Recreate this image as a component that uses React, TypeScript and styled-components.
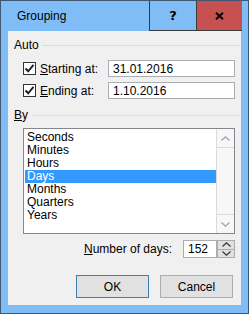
import React from 'react';
import styled, { createGlobalStyle } from 'styled-components';

const GlobalStyle = createGlobalStyle`
  html, body {
    margin: 0;
    padding: 0;
    background: #ffffff;
  }
  body {
    font-family: 'Liberation Sans', Arial, sans-serif;
    font-size: 12px;
    color: #000000;
  }
`;

const Window = styled.div`
  width: 249px;
  height: 314px;
  box-sizing: border-box;
  border: 1px solid #3f5770;
  background: #80bdf7;
  display: flex;
  flex-direction: column;
`;

const TitleBar = styled.div`
  height: 30px;
  display: flex;
  align-items: stretch;
  padding-right: 6px;
`;

const Title = styled.div`
  flex: 1;
  padding-left: 16px;
  display: flex;
  align-items: center;
  font-size: 12px;
  color: #000;
`;

const CaptionButton = styled.div<{ $close?: boolean }>`
  width: ${(p) => (p.$close ? '46px' : '47px')};
  box-sizing: border-box;
  border-left: 1px solid #3c3c3c;
  border-bottom: 1px solid #3c3c3c;
  background: ${(p) => (p.$close ? '#c75050' : 'transparent')};
  display: flex;
  align-items: center;
  justify-content: center;
  font-weight: bold;
  font-size: 13px;
  font-family: 'DejaVu Sans', sans-serif;
`;

const Panel = styled.div`
  margin: 0 7px;
  height: 274px;
  background: #f0f0f0;
  padding: 6px 1px 0 6px;
  box-sizing: border-box;
  display: flex;
  flex-direction: column;
`;

const GroupHeader = styled.div<{ $top: number }>`
  height: 16px;
  margin-top: ${(p) => p.$top}px;
  display: flex;
  align-items: center;
  gap: 3px;
  &::after {
    content: '';
    flex: 1;
    height: 1px;
    background: #d5dfe5;
  }
`;

const FieldRow = styled.div<{ $top: number }>`
  display: flex;
  align-items: center;
  height: 17px;
  margin-top: ${(p) => p.$top}px;
  padding-left: 9px;
`;

const CheckBox = styled.div`
  width: 13px;
  height: 13px;
  box-sizing: border-box;
  border: 1px solid #333333;
  background: #ffffff;
  display: flex;
  align-items: center;
  justify-content: center;
  flex: none;
`;

const FieldLabel = styled.label`
  width: 68px;
  margin-left: 4px;
  flex: none;
`;

const TextBox = styled.div<{ $w: number }>`
  width: ${(p) => p.$w}px;
  height: 100%;
  box-sizing: border-box;
  border: 1px solid #abadb3;
  background: #ffffff;
  padding-left: 4px;
  display: flex;
  align-items: center;
`;

const ListBox = styled.div`
  margin: 5px 0 0 9px;
  width: 212px;
  height: 106px;
  box-sizing: border-box;
  border: 1px solid #828790;
  background: #ffffff;
  display: flex;
`;

const ListItems = styled.div`
  flex: 1;
  padding: 2px 0 0 1px;
`;

const ListItem = styled.div<{ $selected?: boolean }>`
  height: 13px;
  line-height: 13px;
  padding-left: 2px;
  background: ${(p) => (p.$selected ? '#3399ff' : 'transparent')};
  color: ${(p) => (p.$selected ? '#ffffff' : '#000000')};
`;

const ScrollBar = styled.div`
  width: 18px;
  box-sizing: border-box;
  border-left: 1px solid #dadada;
  background: #f7f7f7;
  display: flex;
  flex-direction: column;
  justify-content: space-between;
`;

const ScrollButton = styled.div<{ $top?: boolean }>`
  height: 19px;
  box-sizing: border-box;
  ${(p) => (p.$top ? 'border-bottom: 1px solid #dadada;' : 'border-top: 1px solid #dadada;')}
  display: flex;
  align-items: center;
  justify-content: center;
`;

const NumberRow = styled.div`
  margin-top: 6px;
  height: 18px;
  display: flex;
  align-items: center;
  justify-content: flex-end;
  width: 221px;
`;

const NumberLabel = styled.label`
  margin-right: 11px;
`;

const Spin = styled.div`
  width: 18px;
  height: 100%;
  display: flex;
  flex-direction: column;
`;

const SpinButton = styled.div`
  flex: 1;
  box-sizing: border-box;
  border: 1px solid #acacac;
  background: #e1e1e1;
  display: flex;
  align-items: center;
  justify-content: center;
  & + & {
    border-top: none;
  }
`;

const ButtonRow = styled.div`
  margin-top: 17px;
  display: flex;
  gap: 11px;
  padding-left: 62px;
`;

const Button = styled.div<{ $default?: boolean }>`
  width: 73px;
  height: 23px;
  box-sizing: border-box;
  border: 1px solid ${(p) => (p.$default ? '#3c7fb1' : '#adadad')};
  background: #e1e1e1;
  display: flex;
  align-items: center;
  justify-content: center;
`;

const Check = () => (
  <svg width="11" height="11" viewBox="0 0 11 11">
    <path d="M1.5 5.5 L4.2 8.3 L9.5 1.8" fill="none" stroke="#222" strokeWidth="2" />
  </svg>
);

const CloseGlyph = () => (
  <svg width="9" height="8" viewBox="0 0 9 8">
    <path d="M1 0.8 L8 7.2 M8 0.8 L1 7.2" fill="none" stroke="#000" strokeWidth="2" />
  </svg>
);

const Chevron = ({ up, color = '#a0a0a0' }: { up?: boolean; color?: string }) => (
  <svg width="9" height="5" viewBox="0 0 9 5">
    <path
      d={up ? 'M0.5 4.5 L4.5 0.8 L8.5 4.5' : 'M0.5 0.5 L4.5 4.2 L8.5 0.5'}
      fill="none"
      stroke={color}
      strokeWidth="1.2"
    />
  </svg>
);

const units = ['Seconds', 'Minutes', 'Hours', 'Days', 'Months', 'Quarters', 'Years'];

export default function App() {
  return (
    <>
      <GlobalStyle />
      <Window>
        <TitleBar>
          <Title>Grouping</Title>
          <CaptionButton>?</CaptionButton>
          <CaptionButton $close>
            <CloseGlyph />
          </CaptionButton>
        </TitleBar>
        <Panel>
          <GroupHeader $top={0}>Auto</GroupHeader>
          <FieldRow $top={7}>
            <CheckBox>
              <Check />
            </CheckBox>
            <FieldLabel>
              <u>S</u>tarting at:
            </FieldLabel>
            <TextBox $w={127}>31.01.2016</TextBox>
          </FieldRow>
          <FieldRow $top={5}>
            <CheckBox>
              <Check />
            </CheckBox>
            <FieldLabel>
              <u>E</u>nding at:
            </FieldLabel>
            <TextBox $w={127}>1.10.2016</TextBox>
          </FieldRow>
          <GroupHeader $top={8}>
            <span>
              <u>B</u>y
            </span>
          </GroupHeader>
          <ListBox>
            <ListItems>
              {units.map((u) => (
                <ListItem key={u} $selected={u === 'Days'}>
                  {u}
                </ListItem>
              ))}
            </ListItems>
            <ScrollBar>
              <ScrollButton $top>
                <Chevron up />
              </ScrollButton>
              <ScrollButton>
                <Chevron />
              </ScrollButton>
            </ScrollBar>
          </ListBox>
          <NumberRow>
            <NumberLabel>
              <u>N</u>umber of days:
            </NumberLabel>
            <TextBox $w={34}>152</TextBox>
            <Spin>
              <SpinButton>
                <Chevron up color="#333" />
              </SpinButton>
              <SpinButton>
                <Chevron color="#333" />
              </SpinButton>
            </Spin>
          </NumberRow>
          <ButtonRow>
            <Button $default>OK</Button>
            <Button>Cancel</Button>
          </ButtonRow>
        </Panel>
      </Window>
    </>
  );
}
